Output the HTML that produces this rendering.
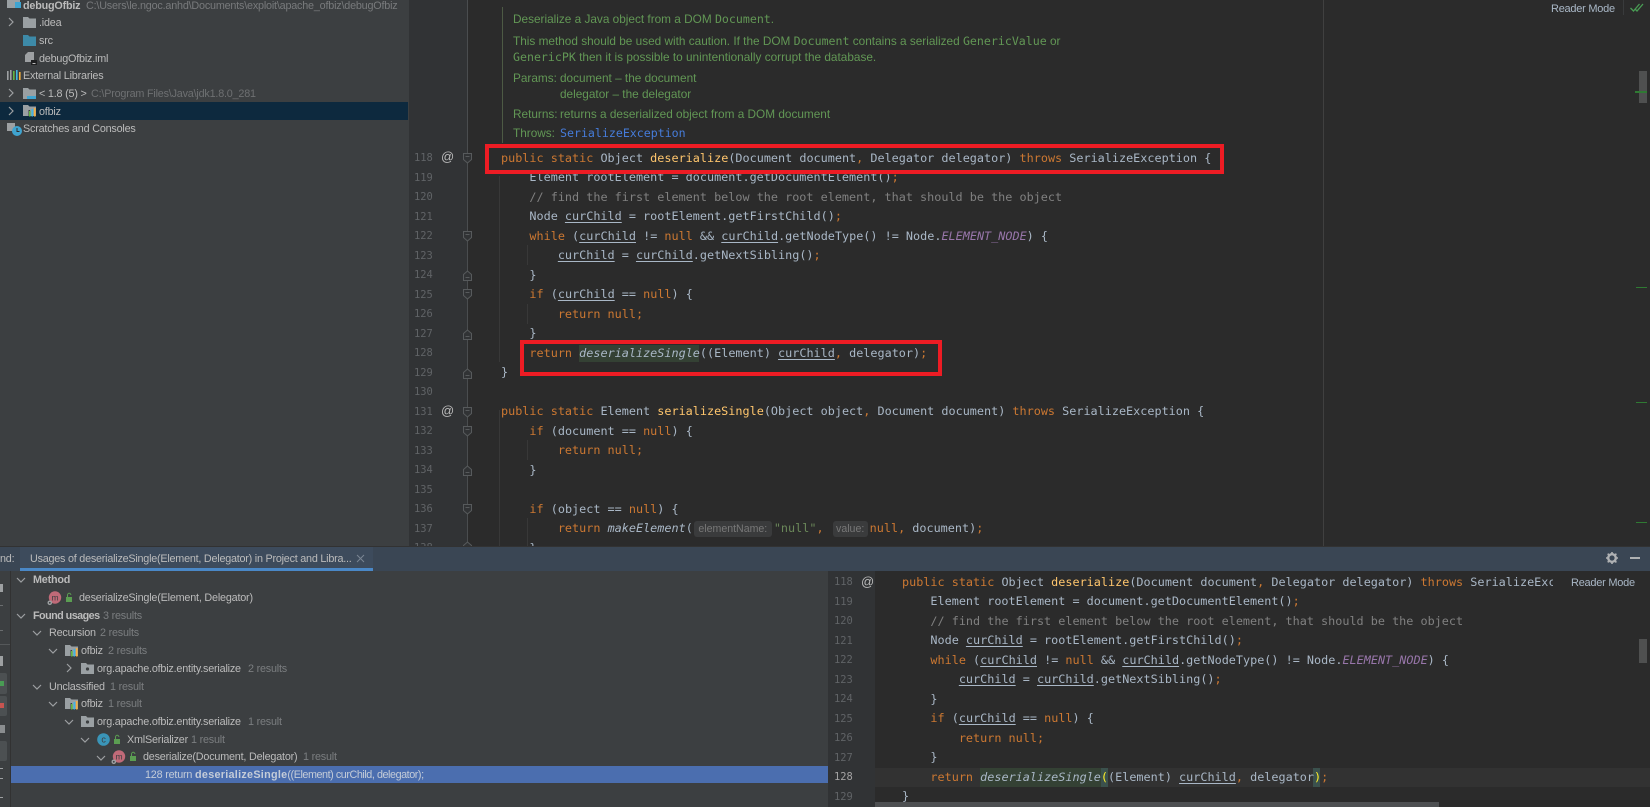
<!DOCTYPE html>
<html><head><meta charset="utf-8"><style>
html,body{margin:0;padding:0;background:#2b2b2b}
#r{position:relative;width:1650px;height:807px;overflow:hidden;background:#2b2b2b;font-family:"Liberation Sans",sans-serif;font-size:10.8px;letter-spacing:-.2px;color:#bbbbbb}
.a{position:absolute}
.t{position:absolute;line-height:16px;height:16px;white-space:nowrap;margin-top:1px}
.g{color:#7b7e80}
b{font-weight:bold}
pre{position:absolute;margin:0;font-family:"DejaVu Sans Mono","Liberation Mono",monospace;font-size:11.8px;letter-spacing:0;line-height:19.5px;color:#a9b7c6;white-space:pre}
pre.n{font-size:10.4px;color:#606366;text-align:left}
i.k{font-style:normal;color:#cc7832}
i.f{font-style:normal;color:#ffc66d}
i.c{font-style:normal;color:#808080}
i.p{color:#9876aa;font-style:italic}
i.s{font-style:normal;color:#6a8759}
i.m{font-style:italic;color:#a9b7c6}
u{text-underline-offset:2px;text-decoration-thickness:1px}
.d{position:absolute;color:#629755;font-size:11.8px;letter-spacing:0;line-height:16px;white-space:nowrap}
.d span{font-family:"DejaVu Sans Mono",monospace;font-size:11.6px}
.h{display:inline-block;background:#3a3b3c;color:#787878;font-family:"Liberation Sans",sans-serif;font-size:10.6px;line-height:16px;height:16px;border-radius:3px;text-align:center;vertical-align:0}
.rb{position:absolute;border:4px solid #ed1c24;box-sizing:border-box}
svg{position:absolute;overflow:visible}
</style></head><body><div id="r">

<svg width="0" height="0" style="left:0;top:0">
<defs>
<symbol id="fo" viewBox="0 0 13 11" overflow="visible"><path d="M0 0h5l1.500 1.500H13V11H0z" fill="#9aa0a3"/></symbol>
<symbol id="fb" viewBox="0 0 13 11" overflow="visible"><path d="M0 0h5l1.500 1.500H13V11H0z" fill="#3d8aa8"/></symbol>
<symbol id="pk" viewBox="0 0 13 11" overflow="visible"><path d="M0 0h5l1.500 1.500H13V11H0z" fill="#9aa0a3"/><circle cx="6.500" cy="6" r="1.600" fill="#3c3f41"/></symbol>
<symbol id="md" viewBox="0 0 13 11" overflow="visible"><path d="M0 0h5l1.500 1.500H13V11H0z" fill="#9aa0a3"/><rect x="5.500" y="5" width="1.600" height="6" fill="#3c3f41"/><rect x="6" y="6" width="1.600" height="5.500" fill="#62b543"/><rect x="8.500" y="4" width="1.600" height="7.500" fill="#40b6e0"/><rect x="11" y="3" width="1.600" height="8.500" fill="#f4af3d"/></symbol>
<symbol id="mi" viewBox="0 0 14 14" overflow="visible"><circle cx="7" cy="6.500" r="6.200" fill="#c06a78"/><text x="7" y="9.300" text-anchor="middle" font-family="Liberation Sans" font-size="8.500" fill="#3c3f41">m</text><circle cx="1.800" cy="11.800" r="2.300" fill="#9da0a2"/><circle cx="1.800" cy="11.800" r="0.900" fill="#3c3f41"/></symbol>
<symbol id="lk" viewBox="0 0 8 9" overflow="visible"><rect x="1" y="4" width="6" height="5" fill="#5b9e52"/><path d="M2.500 4V2a1.700 1.700 0 0 1 3.400 0" fill="none" stroke="#5b9e52" stroke-width="1"/></symbol>
<symbol id="cr" viewBox="0 0 6 10" overflow="visible"><path d="M1 1l4 4-4 4" fill="none" stroke="#9da0a2" stroke-width="1.200"/></symbol>
<symbol id="cd" viewBox="0 0 10 6" overflow="visible"><path d="M1 1l4 4 4-4" fill="none" stroke="#9da0a2" stroke-width="1.200"/></symbol>
<symbol id="fd" viewBox="0 0 9 11" overflow="visible"><path d="M.5.500h8v6l-4 3.500-4-3.500z" fill="#313335" stroke="#575a5c"/><path d="M2.500 3.500h4" stroke="#575a5c"/></symbol>
<symbol id="fu" viewBox="0 0 9 11" overflow="visible"><path d="M.5 10.500h8v-6l-4-3.500-4 3.500z" fill="#313335" stroke="#575a5c"/><path d="M2.500 7.500h4" stroke="#575a5c"/></symbol>
</defs></svg>

<!-- Project panel -->
<div class="a" style="left:0;top:0;width:409px;height:546px;background:#3c3f41"></div>
<div class="a" style="left:0;top:102px;width:408px;height:18px;background:#0d293e"></div>
<svg style="left:7px;top:-3px" width="13" height="11"><use href="#fo" width="13" height="11"/><rect x="8" y="5" width="6" height="6" fill="#3fa4d0"/></svg>
<div class="t" style="left:23px;top:-3px"><b>debugOfbiz</b></div>
<div class="t g" style="left:86px;top:-3px;width:322px;overflow:hidden;color:#787a7c">C:\Users\le.ngoc.anhd\Documents\exploit\apache_ofbiz\debugOfbiz</div>
<svg style="left:8px;top:17px" width="6" height="10"><use href="#cr" width="6" height="10"/></svg>
<svg style="left:23px;top:17px" width="13" height="11"><use href="#fo" width="13" height="11"/></svg>
<div class="t" style="left:39px;top:14px">.idea</div>
<svg style="left:23px;top:35px" width="13" height="11"><use href="#fb" width="13" height="11"/></svg>
<div class="t" style="left:39px;top:32px">src</div>
<svg style="left:25px;top:52px" width="11" height="13"><path d="M3 0h6v10H0V3z" fill="#9da0a2"/><rect x="6" y="8" width="6" height="5" fill="#1e1f20"/><rect x="7.500" y="11" width="3" height="1" fill="#bbb"/></svg>
<div class="t" style="left:39px;top:50px">debugOfbiz.iml</div>
<svg style="left:7px;top:70px" width="13" height="11"><rect x="0" y="1" width="1.600" height="9" fill="#9da0a2"/><rect x="3" y="0" width="1.600" height="10" fill="#9da0a2"/><rect x="6" y="1" width="1.600" height="9" fill="#62b543"/><rect x="9" y="0" width="1.600" height="10" fill="#40b6e0"/><rect x="12" y="2" width="1.600" height="8" fill="#f4af3d"/></svg>
<div class="t" style="left:23px;top:67px">External Libraries</div>
<svg style="left:8px;top:88px" width="6" height="10"><use href="#cr" width="6" height="10"/></svg>
<svg style="left:23px;top:88px" width="13" height="11"><use href="#fo" width="13" height="11"/><rect x="4" y="8" width="9" height="3" fill="#3fa4d0"/></svg>
<div class="t" style="left:39px;top:85px">&lt; 1.8 (5) &gt;</div>
<div class="t" style="left:91px;top:85px;color:#6e7072">C:\Program Files\Java\jdk1.8.0_281</div>
<svg style="left:8px;top:106px" width="6" height="10"><use href="#cr" width="6" height="10"/></svg>
<svg style="left:23px;top:105px" width="13" height="11"><use href="#md" width="13" height="11"/></svg>
<div class="t" style="left:39px;top:103px">ofbiz</div>
<svg style="left:7px;top:122px" width="14" height="14"><path d="M0 1h8v8H0z" fill="#9da0a2"/><circle cx="10" cy="9" r="5" fill="#3fa4d0"/><path d="M10 6v3.500h2.500" stroke="#2b2b2b" fill="none"/></svg>
<div class="t" style="left:23px;top:120px">Scratches and Consoles</div>

<!-- Top editor -->
<div class="a" style="left:409px;top:0;width:59px;height:546px;background:#313335"></div>
<div class="a" style="left:467px;top:0;width:1px;height:546px;background:#4a4d4f"></div>
<div class="a" style="left:502px;top:7px;width:1px;height:136px;background:#4d5a44"></div>
<div class="a" style="left:499px;top:176px;width:1px;height:186px;background:#383838"></div>
<div class="a" style="left:499px;top:410px;width:1px;height:136px;background:#383838"></div>
<div class="a" style="left:527px;top:245px;width:1px;height:20px;background:#383838"></div>
<div class="a" style="left:527px;top:304px;width:1px;height:20px;background:#383838"></div>
<div class="a" style="left:527px;top:440px;width:1px;height:20px;background:#383838"></div>
<div class="a" style="left:527px;top:518px;width:1px;height:28px;background:#383838"></div>
<div class="a" style="left:1323px;top:0;width:1px;height:546px;background:#404040"></div>
<div class="a" style="left:579px;top:345px;width:120px;height:17px;background:#344134"></div>

<div class="d" style="left:513px;top:11px">Deserialize a Java object from a DOM <span>Document</span>.</div>
<div class="d" style="left:513px;top:33px">This method should be used with caution. If the DOM <span>Document</span> contains a serialized <span>GenericValue</span> or</div>
<div class="d" style="left:513px;top:49px"><span>GenericPK</span> then it is possible to unintentionally corrupt the database.</div>
<div class="d" style="left:513px;top:70px">Params:</div>
<div class="d" style="left:560px;top:70px">document – the document</div>
<div class="d" style="left:560px;top:86px">delegator – the delegator</div>
<div class="d" style="left:513px;top:106px">Returns:</div>
<div class="d" style="left:560px;top:106px">returns a deserialized object from a DOM document</div>
<div class="d" style="left:513px;top:125px">Throws:</div>
<div class="d" style="left:560px;top:125px;color:#467cda"><span>SerializeException</span></div>

<div class="a" style="left:409px;top:0;width:1241px;height:546px;overflow:hidden">
<pre class="n" style="left:5px;top:149px">118
119
120
121
122
123
124
125
126
127
128
129
130
131
132
133
134
135
136
137
138</pre>
<pre style="left:92px;top:148.5px"><i class="k">public static</i> Object <i class="f">deserialize</i>(Document document<i class="k">,</i> Delegator delegator) <i class="k">throws</i> SerializeException {
    Element rootElement = document.getDocumentElement()<i class="k">;</i>
    <i class="c">// find the first element below the root element, that should be the object</i>
    Node <u>curChild</u> = rootElement.getFirstChild()<i class="k">;</i>
    <i class="k">while</i> (<u>curChild</u> != <i class="k">null</i> &amp;&amp; <u>curChild</u>.getNodeType() != Node.<i class="p">ELEMENT_NODE</i>) {
        <u>curChild</u> = <u>curChild</u>.getNextSibling()<i class="k">;</i>
    }
    <i class="k">if</i> (<u>curChild</u> == <i class="k">null</i>) {
        <i class="k">return null;</i>
    }
    <i class="k">return</i> <i class="m">deserializeSingle</i>((Element) <u>curChild</u><i class="k">,</i> delegator)<i class="k">;</i>
}

<i class="k">public static</i> Element <i class="f">serializeSingle</i>(Object object<i class="k">,</i> Document document) <i class="k">throws</i> SerializeException {
    <i class="k">if</i> (document == <i class="k">null</i>) {
        <i class="k">return null;</i>
    }

    <i class="k">if</i> (object == <i class="k">null</i>) {
        <i class="k">return</i> <i class="m">makeElement</i>(<span class="h" style="width:78px;margin-left:1px">elementName:</span><i class="s" style="margin-left:2px">"null"</i><i class="k">,</i> <span class="h" style="width:35px;margin-left:2px">value:</span><i class="k" style="margin-left:2px">null,</i> document)<i class="k">;</i>
    }</pre>
</div>
<div class="t" style="left:441px;top:148px;font-size:13px;letter-spacing:0;color:#bbbbbb">@</div>
<div class="t" style="left:441px;top:402px;font-size:13px;letter-spacing:0;color:#bbbbbb">@</div>
<svg style="left:463px;top:153px" width="9" height="11"><use href="#fd" width="9" height="11"/></svg>
<svg style="left:463px;top:231px" width="9" height="11"><use href="#fd" width="9" height="11"/></svg>
<svg style="left:463px;top:270px" width="9" height="11"><use href="#fu" width="9" height="11"/></svg>
<svg style="left:463px;top:289px" width="9" height="11"><use href="#fd" width="9" height="11"/></svg>
<svg style="left:463px;top:329px" width="9" height="11"><use href="#fu" width="9" height="11"/></svg>
<svg style="left:463px;top:368px" width="9" height="11"><use href="#fu" width="9" height="11"/></svg>
<svg style="left:463px;top:407px" width="9" height="11"><use href="#fd" width="9" height="11"/></svg>
<svg style="left:463px;top:426px" width="9" height="11"><use href="#fd" width="9" height="11"/></svg>
<svg style="left:463px;top:465px" width="9" height="11"><use href="#fu" width="9" height="11"/></svg>
<svg style="left:463px;top:504px" width="9" height="11"><use href="#fd" width="9" height="11"/></svg>
<svg style="left:463px;top:541px" width="9" height="5" viewBox="0 0 9 5"><use href="#fu" width="9" height="11"/></svg>

<div class="rb" style="left:485px;top:144px;width:739px;height:30px"></div>
<div class="rb" style="left:520px;top:340px;width:422px;height:36px"></div>

<!-- Top right -->
<div class="t" style="left:1551px;top:0;font-size:11px;letter-spacing:-.25px;color:#a9b7c6">Reader Mode</div>
<div class="a" style="left:1623px;top:0;width:1px;height:15px;background:#393b3c"></div>
<svg style="left:1630px;top:3px" width="18" height="10"><path d="M.5 5l3 3 6-7M5 6l2 2 6-7" fill="none" stroke="#499c54" stroke-width="1.300"/></svg>
<div class="a" style="left:1639px;top:71px;width:8px;height:32px;background:#4f5050"></div>
<div class="a" style="left:1635px;top:91px;width:12px;height:2px;background:#2f7a33"></div>
<div class="a" style="left:1636px;top:287px;width:11px;height:1px;background:#2f7a33"></div>
<div class="a" style="left:1636px;top:402px;width:11px;height:1px;background:#2f7a33"></div>
<div class="a" style="left:1636px;top:522px;width:11px;height:1px;background:#2f7a33"></div>

<!-- Tool window -->
<div class="a" style="left:0;top:546px;width:1650px;height:1px;background:#323232"></div>
<div class="a" style="left:0;top:547px;width:1650px;height:24px;background:#3a4654"></div>
<div class="a" style="left:20px;top:547px;width:353px;height:24px;background:#3d4b5c"></div>
<div class="a" style="left:20px;top:568px;width:353px;height:3px;background:#4a88c7"></div>
<div class="t" style="left:0;top:550px">nd:</div>
<div class="t" style="left:30px;top:550px;width:325px;overflow:hidden;letter-spacing:-.23px">Usages of deserializeSingle(Element, Delegator) in Project and Libra...</div>
<svg style="left:356px;top:554px" width="9" height="9"><path d="M1 1l7 7M8 1l-7 7" stroke="#7a8593" stroke-width="1"/></svg>
<svg style="left:1606px;top:552px" width="12" height="12"><circle cx="6" cy="6" r="3.800" fill="none" stroke="#afb1b3" stroke-width="2.400"/><path d="M6 0v2M6 10v2M0 6h2M10 6h2M1.700 1.700l1.400 1.400M9 9l1.400 1.400M1.700 10.300L3.100 9M9 3.100l1.400-1.400" stroke="#afb1b3" stroke-width="1.600"/></svg>
<div class="a" style="left:1630px;top:557px;width:10px;height:2px;background:#afb1b3"></div>

<div class="a" style="left:0;top:571px;width:828px;height:236px;background:#3c3f41"></div>
<div class="a" style="left:10px;top:571px;width:1px;height:236px;background:#323232"></div>
<div class="a" style="left:0;top:673px;width:7px;height:21px;background:#4c5052;border-radius:0 2px 2px 0"></div>
<div class="a" style="left:0;top:696px;width:7px;height:20px;background:#4c5052;border-radius:0 2px 2px 0"></div>
<div class="a" style="left:0;top:741px;width:7px;height:20px;background:#4c5052;border-radius:0 2px 2px 0"></div>
<div class="a" style="left:0;top:681px;width:4px;height:5px;background:#499c54"></div>
<div class="a" style="left:0;top:703px;width:4px;height:5px;background:#c75450"></div>
<div class="a" style="left:0;top:584px;width:3px;height:8px;background:#9da0a2"></div>
<div class="a" style="left:0;top:605px;width:3px;height:1px;background:#6a6d6f"></div>
<div class="a" style="left:0;top:630px;width:3px;height:1px;background:#6a6d6f"></div>
<div class="a" style="left:0;top:644px;width:10px;height:1px;background:#55585a"></div>
<div class="a" style="left:0;top:656px;width:3px;height:10px;background:#9da0a2"></div>
<div class="a" style="left:0;top:725px;width:5px;height:8px;background:#8a8d8f"></div>
<div class="a" style="left:0;top:768px;width:3px;height:1px;background:#9da0a2"></div>
<div class="a" style="left:0;top:778px;width:3px;height:1px;background:#9da0a2"></div>
<div class="a" style="left:0;top:797px;width:3px;height:1px;background:#9da0a2"></div>

<div class="a" style="left:11px;top:766px;width:817px;height:17px;background:#4b6eaf"></div>

<svg style="left:16px;top:577px" width="10" height="6"><use href="#cd" width="10" height="6"/></svg>
<div class="t" style="left:33px;top:571px"><b>Method</b></div>
<svg style="left:48px;top:591px" width="14" height="14"><use href="#mi" width="14" height="14"/></svg>
<svg style="left:65px;top:593px" width="8" height="9"><use href="#lk" width="8" height="9"/></svg>
<div class="t" style="left:79px;top:589px">deserializeSingle(Element, Delegator)</div>
<svg style="left:16px;top:613px" width="10" height="6"><use href="#cd" width="10" height="6"/></svg>
<div class="t" style="left:33px;top:607px;letter-spacing:-.55px"><b>Found usages</b></div>
<div class="t g" style="left:103px;top:607px">3 results</div>
<svg style="left:32px;top:630px" width="10" height="6"><use href="#cd" width="10" height="6"/></svg>
<div class="t" style="left:49px;top:624px">Recursion</div>
<div class="t g" style="left:100px;top:624px">2 results</div>
<svg style="left:48px;top:648px" width="10" height="6"><use href="#cd" width="10" height="6"/></svg>
<svg style="left:65px;top:645px" width="13" height="11"><use href="#md" width="13" height="11"/></svg>
<div class="t" style="left:81px;top:642px">ofbiz</div>
<div class="t g" style="left:108px;top:642px">2 results</div>
<svg style="left:66px;top:663px" width="6" height="10"><use href="#cr" width="6" height="10"/></svg>
<svg style="left:81px;top:663px" width="13" height="11"><use href="#pk" width="13" height="11"/></svg>
<div class="t" style="left:97px;top:660px">org.apache.ofbiz.entity.serialize</div>
<div class="t g" style="left:248px;top:660px">2 results</div>
<svg style="left:32px;top:684px" width="10" height="6"><use href="#cd" width="10" height="6"/></svg>
<div class="t" style="left:49px;top:678px">Unclassified</div>
<div class="t g" style="left:110px;top:678px">1 result</div>
<svg style="left:48px;top:701px" width="10" height="6"><use href="#cd" width="10" height="6"/></svg>
<svg style="left:65px;top:698px" width="13" height="11"><use href="#md" width="13" height="11"/></svg>
<div class="t" style="left:81px;top:695px">ofbiz</div>
<div class="t g" style="left:108px;top:695px">1 result</div>
<svg style="left:64px;top:719px" width="10" height="6"><use href="#cd" width="10" height="6"/></svg>
<svg style="left:81px;top:716px" width="13" height="11"><use href="#pk" width="13" height="11"/></svg>
<div class="t" style="left:97px;top:713px">org.apache.ofbiz.entity.serialize</div>
<div class="t g" style="left:248px;top:713px">1 result</div>
<svg style="left:80px;top:737px" width="10" height="6"><use href="#cd" width="10" height="6"/></svg>
<svg style="left:97px;top:733px" width="13" height="13"><circle cx="6.500" cy="6.500" r="6.300" fill="#3a95b8"/><text x="6.500" y="9.500" text-anchor="middle" font-family="Liberation Sans" font-size="9" fill="#3c3f41">c</text></svg>
<svg style="left:113px;top:735px" width="8" height="9"><use href="#lk" width="8" height="9"/></svg>
<div class="t" style="left:127px;top:731px">XmlSerializer</div>
<div class="t g" style="left:191px;top:731px">1 result</div>
<svg style="left:96px;top:755px" width="10" height="6"><use href="#cd" width="10" height="6"/></svg>
<svg style="left:112px;top:750px" width="14" height="14"><use href="#mi" width="14" height="14"/></svg>
<svg style="left:129px;top:752px" width="8" height="9"><use href="#lk" width="8" height="9"/></svg>
<div class="t" style="left:143px;top:748px">deserialize(Document, Delegator)</div>
<div class="t g" style="left:303px;top:748px">1 result</div>
<div class="t" style="left:145px;top:766px;color:#c4ccd8">128 return <b style="letter-spacing:.28px">deserializeSingle</b><span style="letter-spacing:-.45px">((Element) curChild, delegator);</span></div>

<!-- Preview editor -->
<div class="a" style="left:828px;top:571px;width:47px;height:236px;background:#313335"></div>
<div class="a" style="left:875px;top:571px;width:775px;height:236px;background:#2b2b2b"></div>
<div class="a" style="left:875px;top:768px;width:775px;height:19px;background:#323232"></div>
<div class="a" style="left:828px;top:768px;width:47px;height:19px;background:#313335"></div>
<div class="a" style="left:820px;top:766px;width:8px;height:17px;background:#4b6eaf"></div>
<div class="a" style="left:980px;top:768px;width:121px;height:19px;background:#344134"></div>
<div class="a" style="left:1101px;top:768px;width:7px;height:19px;background:#3b514d"></div>
<div class="a" style="left:1313px;top:768px;width:7px;height:19px;background:#3b514d"></div>
<div class="a" style="left:828px;top:571px;width:725px;height:236px;overflow:hidden">
<pre class="n" style="left:6px;top:2px">118
119
120
121
122
123
124
125
126
127
<span style="color:#a4a3a3">128</span>
129</pre>
<pre style="left:74px;top:1.500px"><i class="k">public static</i> Object <i class="f">deserialize</i>(Document document<i class="k">,</i> Delegator delegator) <i class="k">throws</i> SerializeException {
    Element rootElement = document.getDocumentElement()<i class="k">;</i>
    <i class="c">// find the first element below the root element, that should be the object</i>
    Node <u>curChild</u> = rootElement.getFirstChild()<i class="k">;</i>
    <i class="k">while</i> (<u>curChild</u> != <i class="k">null</i> &amp;&amp; <u>curChild</u>.getNodeType() != Node.<i class="p">ELEMENT_NODE</i>) {
        <u>curChild</u> = <u>curChild</u>.getNextSibling()<i class="k">;</i>
    }
    <i class="k">if</i> (<u>curChild</u> == <i class="k">null</i>) {
        <i class="k">return null;</i>
    }
    <i class="k">return</i> <i class="m">deserializeSingle</i><span style="color:#ffef28">(</span>(Element) <u>curChild</u><i class="k">,</i> delegator<span style="color:#ffef28">)</span><i class="k">;</i>
}</pre>
</div>
<div class="t" style="left:861px;top:573px;font-size:13px;letter-spacing:0;color:#bbbbbb">@</div>
<div class="t" style="left:1571px;top:574px;font-size:11px;letter-spacing:-.25px;color:#a9b7c6">Reader Mode</div>
<div class="a" style="left:1639px;top:639px;width:8px;height:24px;background:#4f5050"></div>
<div class="a" style="left:875px;top:802px;width:564px;height:5px;background:#4e5052"></div>

</div></body></html>
